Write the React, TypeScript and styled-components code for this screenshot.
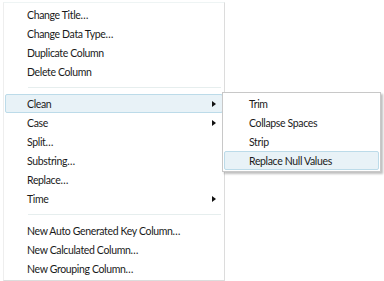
import React from "react";
import styled, { createGlobalStyle } from "styled-components";

const Global = createGlobalStyle`
  html, body { margin: 0; padding: 0; background: #ffffff; }
  body { font-family: Lato, "Noto Sans", sans-serif; }
`;

const Page = styled.div`
  position: relative;
  width: 384px;
  height: 281px;
  overflow: hidden;
  padding: 2px 0 0 3px;
  box-sizing: border-box;
`;

const Menu = styled.div`
  width: 222px;
  height: 279px;
  box-sizing: border-box;
  border: 1px solid #dcdcdc;
  border-left-color: #eeeeee;
  border-top-color: #eef4f4;
  background: #ffffff;
  padding: 2px 1px 0 1px;
  display: flex;
  flex-direction: column;
`;

const Item = styled.div<{ $active?: boolean; $indent?: number }>`
  position: relative;
  height: 19px;
  box-sizing: border-box;
  display: flex;
  align-items: center;
  padding-left: ${(p) => p.$indent ?? 21}px;
  font-size: 10.5px;
  letter-spacing: -0.35px;
  color: #1a1a1a;
  border: 1px solid ${(p) => (p.$active ? "#bcdbe9" : "transparent")};
  background: ${(p) => (p.$active ? "#e8f2f7" : "transparent")};
  border-radius: 2px;
  white-space: nowrap;
`;

const Arrow = styled.span`
  position: absolute;
  right: 6px;
  top: 50%;
  margin-top: -3px;
  width: 0;
  height: 0;
  border-top: 3px solid transparent;
  border-bottom: 3px solid transparent;
  border-left: 4px solid #111;
`;

const Separator = styled.div`
  height: 13px;
  display: flex;
  align-items: center;
  padding-left: 23px;
  padding-right: 2px;
  &::after {
    content: "";
    flex: 1;
    height: 1px;
    background: #e6eeee;
  }
`;

const SubMenu = styled.div`
  position: absolute;
  left: 222px;
  top: 92px;
  width: 159px;
  box-sizing: border-box;
  border: 1px solid #c8c8c8;
  background: #ffffff;
  padding: 1px;
  display: flex;
  flex-direction: column;
  box-shadow: 2px 2px 2px rgba(0, 0, 0, 0.25);
`;

type Entry = { label: string; sub?: boolean; active?: boolean } | "sep";

const mainItems: Entry[] = [
  { label: "Change Title…" },
  { label: "Change Data Type…" },
  { label: "Duplicate Column" },
  { label: "Delete Column" },
  "sep",
  { label: "Clean", sub: true, active: true },
  { label: "Case", sub: true },
  { label: "Split…" },
  { label: "Substring…" },
  { label: "Replace…" },
  { label: "Time", sub: true },
  "sep",
  { label: "New Auto Generated Key Column…" },
  { label: "New Calculated Column…" },
  { label: "New Grouping Column…" },
];

const subItems = [
  { label: "Trim" },
  { label: "Collapse Spaces" },
  { label: "Strip" },
  { label: "Replace Null Values", active: true },
];

export default function App() {
  return (
    <Page>
      <Global />
      <Menu>
        {mainItems.map((e, i) =>
          e === "sep" ? (
            <Separator key={i} />
          ) : (
            <Item key={i} $active={e.active}>
              {e.label}
              {e.sub && <Arrow />}
            </Item>
          )
        )}
      </Menu>
      <SubMenu>
        {subItems.map((e, i) => (
          <Item key={i} $active={e.active} $indent={24}>
            {e.label}
          </Item>
        ))}
      </SubMenu>
    </Page>
  );
}
